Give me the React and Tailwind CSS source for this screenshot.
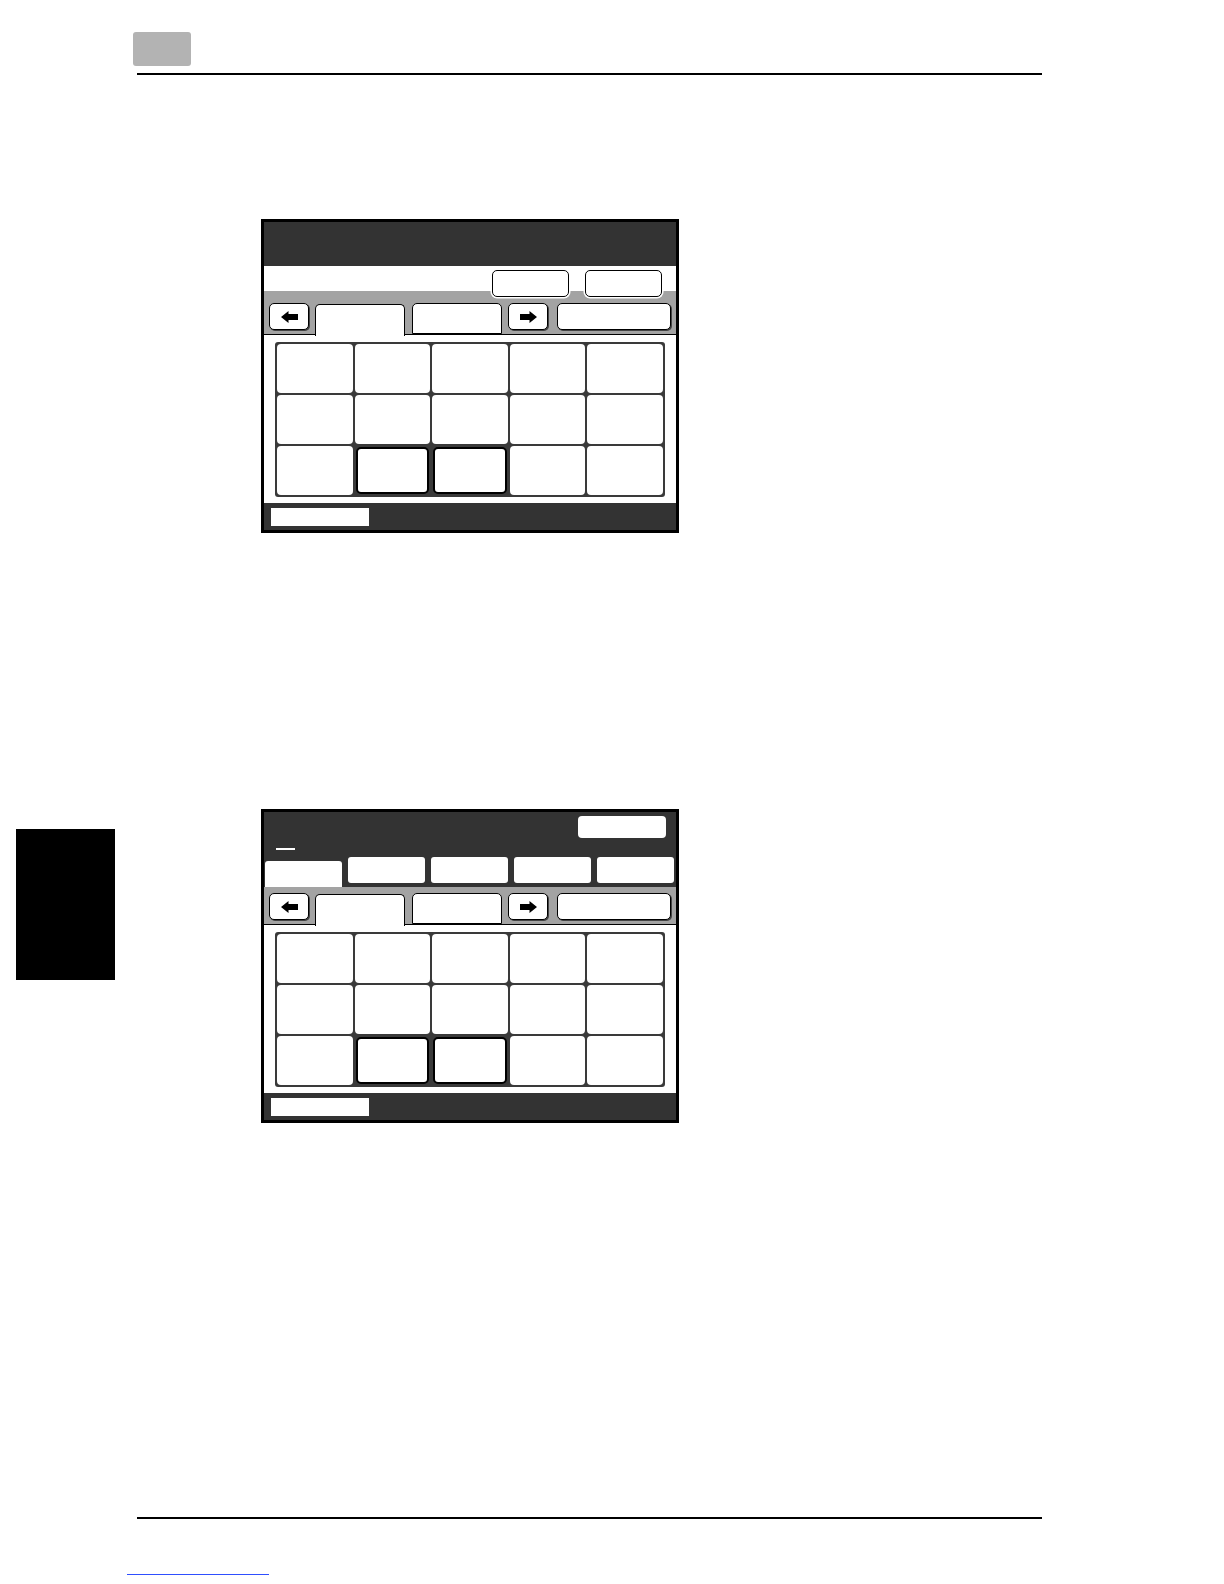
function ArrowIcon({ dir }) {
  const pts =
    dir === "left"
      ? "0,6 7.5,0 7.5,3 17,3 17,9 7.5,9 7.5,12"
      : "17,6 9.5,0 9.5,3 0,3 0,9 9.5,9 9.5,12";
  return (
    <svg width="17" height="12" viewBox="0 0 17 12">
      <polygon points={pts} fill="#000" />
    </svg>
  );
}

function ArrowButton({ dir }) {
  return (
    <div className="w-[40px] h-[27px] mb-[4px] bg-white border-[1.5px] border-black rounded-[5px] shadow-[1px_1px_0_#444] flex items-center justify-center">
      <ArrowIcon dir={dir} />
    </div>
  );
}

function TabRow() {
  return (
    <div className="flex items-end h-[31px] pl-[5px]">
      <ArrowButton dir="left" />
      {/* selected tab, open at the bottom */}
      <div className="ml-[6px] w-[90px] h-[32px] -mb-[1.5px] relative z-10 bg-white border-[1.5px] border-b-0 border-black rounded-t-[5px]"></div>
      <div className="ml-[7px] w-[90px] h-[31px] bg-white border-[1.5px] border-black rounded-t-[5px]"></div>
      <div className="ml-[6px]">
        <ArrowButton dir="right" />
      </div>
      <div className="ml-[9px] w-[114px] h-[27px] mb-[4px] bg-white border-[1.5px] border-black rounded-[5px] shadow-[1px_1px_0_#444]"></div>
    </div>
  );
}

function KeyGrid() {
  const cells = Array.from({ length: 15 }, (_, i) => i);
  return (
    <div className="w-[390px] h-[155px] bg-[#3a3a3a] rounded-[3px] p-[2px] grid grid-cols-5 grid-rows-3 gap-[2px]">
      {cells.map((i) =>
        i === 11 || i === 12 ? (
          <div
            key={i}
            className="bg-white border-[2.5px] border-black rounded-[5px] m-[1px]"
          ></div>
        ) : (
          <div key={i} className="bg-white rounded-[4px]"></div>
        )
      )}
    </div>
  );
}

function PanelBody() {
  return (
    <>
      <div className="h-[169px] bg-white border-t-[1.5px] border-black pl-[11px] pt-[7px]">
        <KeyGrid />
      </div>
      <div className="h-[27px] bg-[#333333] pl-[7px] pt-[5px]">
        <div className="w-[98px] h-[18px] bg-white"></div>
      </div>
    </>
  );
}

function PanelOne() {
  return (
    <div className="w-[418px] h-[314px] border-[3px] border-black bg-white flex flex-col">
      <div className="h-[44px] bg-[#333333]"></div>
      <div className="h-[25px] bg-white flex justify-end items-start pt-[4px] pr-[14px] gap-[16px]">
        <div className="relative z-20 w-[77px] h-[27px] bg-white border-[1.5px] border-black rounded-[5px] shadow-[0_0_0_1.5px_#fff]"></div>
        <div className="relative z-20 w-[77px] h-[27px] bg-white border-[1.5px] border-black rounded-[5px] shadow-[0_0_0_1.5px_#fff]"></div>
      </div>
      <div className="h-[43px] bg-[#a3a3a3] pt-[12px]">
        <TabRow />
      </div>
      <PanelBody />
    </div>
  );
}

function PanelTwo() {
  const tabs = [0, 1, 2, 3, 4];
  return (
    <div className="w-[418px] h-[314px] border-[3px] border-black bg-white flex flex-col">
      <div className="h-[75px] bg-[#333333] pt-[4px] flex flex-col">
        <div className="h-[21px] flex justify-end pr-[10px]">
          <div className="w-[88px] h-[22px] bg-white rounded-[4px]"></div>
        </div>
        <div className="mt-[11px] ml-[12px] w-[19px] h-[2px] bg-white"></div>
        <div className="mt-[6px] h-[31px] flex items-end gap-[6px] px-[1px]">
          {tabs.map((t) =>
            t === 0 ? (
              <div key={t} className="w-[77px] h-[26px] bg-white rounded-t-[3px]"></div>
            ) : (
              <div key={t} className="w-[77px] h-[26px] mb-[4px] bg-white rounded-[3px]"></div>
            )
          )}
        </div>
      </div>
      <div className="h-[37px] bg-[#a3a3a3] pt-[6px]">
        <TabRow />
      </div>
      <PanelBody />
    </div>
  );
}

export default function App() {
  return (
    <div
      className="w-[1224px] h-[1584px] bg-white overflow-hidden"
      style={{ fontFamily: '"Liberation Sans", Arial, sans-serif' }}
    >
      {/* page header */}
      <div className="pt-[32px]">
        <div className="ml-[133px] w-[58px] h-[34px] bg-[#b3b3b3] rounded-[3px]"></div>
        <div className="mt-[7px] ml-[137px] w-[905px] h-[2px] bg-black"></div>
      </div>

      {/* first screen */}
      <div className="mt-[144px] ml-[261px]">
        <PanelOne />
      </div>

      {/* second screen with chapter tab */}
      <div className="mt-[276px] flex items-start">
        <div className="ml-[16px] mt-[20px] w-[99px] h-[151px] bg-black"></div>
        <div className="ml-[146px]">
          <PanelTwo />
        </div>
      </div>

      {/* page footer */}
      <div className="mt-[394px] ml-[137px] w-[905px] h-[2px] bg-black"></div>
      <div className="mt-[55px] ml-[127px] w-[142px] h-[1px] bg-[#2f4fff]"></div>
    </div>
  );
}
